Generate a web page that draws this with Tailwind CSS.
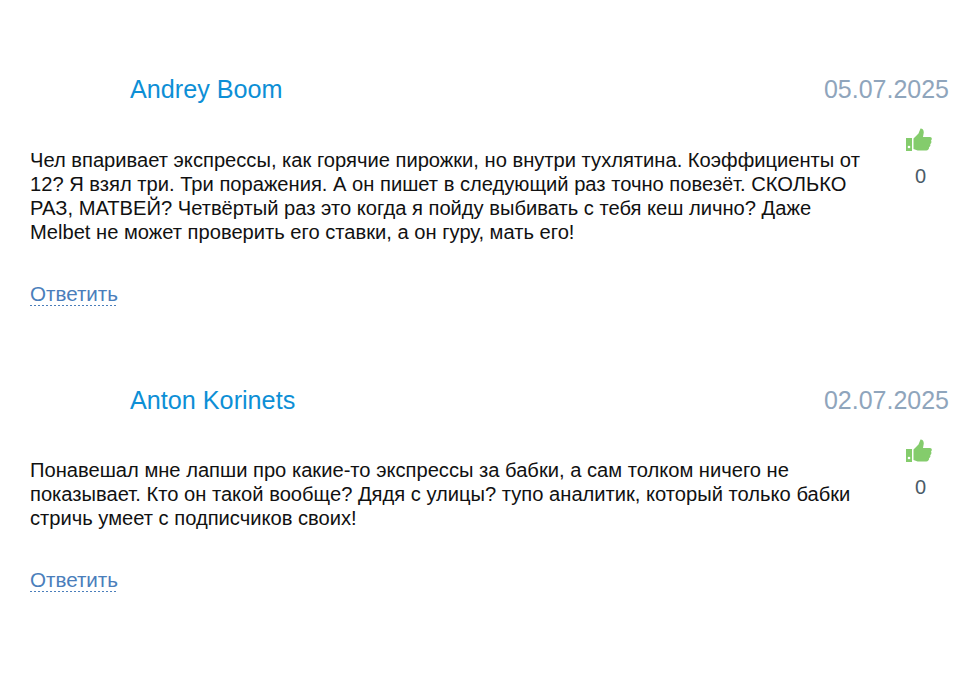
<!DOCTYPE html>
<html lang="ru">

<head>
    <meta charset="UTF-8">
    <meta name="viewport" content="width=device-width, initial-scale=1.0">
    <title>Отзывы</title>
    <script src="https://cdn.jsdelivr.net/npm/@tailwindcss/browser@4"></script>
</head>

<body class="bg-white font-['Liberation_Sans',Arial,sans-serif] h-[687px] overflow-hidden">
    <main class="pl-[30px] pr-[29px] pt-[72px]">

        <!-- First review -->
        <article class="h-[311px]">
            <header class="flex justify-between items-center h-[36px]">
                <a href="#" class="pl-[100px] text-[25.2px] text-[#0d8fd6]">Andrey Boom</a>
                <span class="text-[25px] text-[#8fa5bc]">05.07.2025</span>
            </header>
            <div class="flex justify-between mt-[20px]">
                <p class="w-[840px] pt-[20px] text-[20.15px] leading-[24px] text-[#111]">Чел впаривает экспрессы, как горячие пирожки, но внутри тухлятина. Коэффициенты от 12? Я взял три. Три поражения. А он пишет в следующий раз точно повезёт. СКОЛЬКО РАЗ, МАТВЕЙ? Четвёртый раз это когда я пойду выбивать с тебя кеш лично? Даже Melbet не может проверить его ставки, а он гуру, мать его!</p>
                <div class="w-[28px] mr-[17px] flex flex-col items-center">
                    <svg class="w-[27px] h-[26px]" viewBox="0 0 27 26" fill="#84cc6c"><path d="M1 10h6v13H1zM8.500 10.500l5-5 2-5c2.500 0 3.500 2 3.200 4.500L18 9h7c2 0 2.400 2.500 1 3.500.8 1.300.4 2.800-.8 3.500.5 1.400 0 2.700-1.200 3.300.3 1.700-.8 3.200-2.700 3.200H14c-2 0-3.500-.7-5.500-1.500z"/><circle cx="4" cy="19" r="1.300" fill="#fff"/></svg>
                    <span class="mt-[10px] ml-[5px] text-[20px] leading-[24px] text-[#4b5b68]">0</span>
                </div>
            </div>
            <a href="#" class="inline-block mt-[39px] text-[20.600px] leading-[22px] text-[#4a7ebb]">Ответить
                <span class="block h-[1px] bg-[repeating-linear-gradient(90deg,#4a7ebb_0,#4a7ebb_2px,transparent_2px,transparent_4px)]"></span>
            </a>
        </article>

        <!-- Second review -->
        <article>
            <header class="flex justify-between items-center h-[36px]">
                <a href="#" class="pl-[100px] text-[25.2px] text-[#0d8fd6]">Anton Korinets</a>
                <span class="text-[25px] text-[#8fa5bc]">02.07.2025</span>
            </header>
            <div class="flex justify-between mt-[20px]">
                <p class="w-[840px] pt-[19px] text-[20.15px] leading-[24px] text-[#111]">Понавешал мне лапши про какие-то экспрессы за бабки, а сам толком ничего не показывает. Кто он такой вообще? Дядя с улицы? тупо аналитик, который только бабки стричь умеет с подписчиков своих!</p>
                <div class="w-[28px] mr-[17px] flex flex-col items-center">
                    <svg class="w-[27px] h-[26px]" viewBox="0 0 27 26" fill="#84cc6c"><path d="M1 10h6v13H1zM8.500 10.500l5-5 2-5c2.500 0 3.500 2 3.200 4.500L18 9h7c2 0 2.400 2.500 1 3.500.8 1.300.4 2.800-.8 3.500.5 1.400 0 2.700-1.200 3.300.3 1.700-.8 3.200-2.700 3.200H14c-2 0-3.500-.7-5.500-1.500z"/><circle cx="4" cy="19" r="1.300" fill="#fff"/></svg>
                    <span class="mt-[10px] ml-[5px] text-[20px] leading-[24px] text-[#4b5b68]">0</span>
                </div>
            </div>
            <a href="#" class="inline-block mt-[39px] text-[20.600px] leading-[22px] text-[#4a7ebb]">Ответить
                <span class="block h-[1px] bg-[repeating-linear-gradient(90deg,#4a7ebb_0,#4a7ebb_2px,transparent_2px,transparent_4px)]"></span>
            </a>
        </article>

    </main>
</body>

</html>
